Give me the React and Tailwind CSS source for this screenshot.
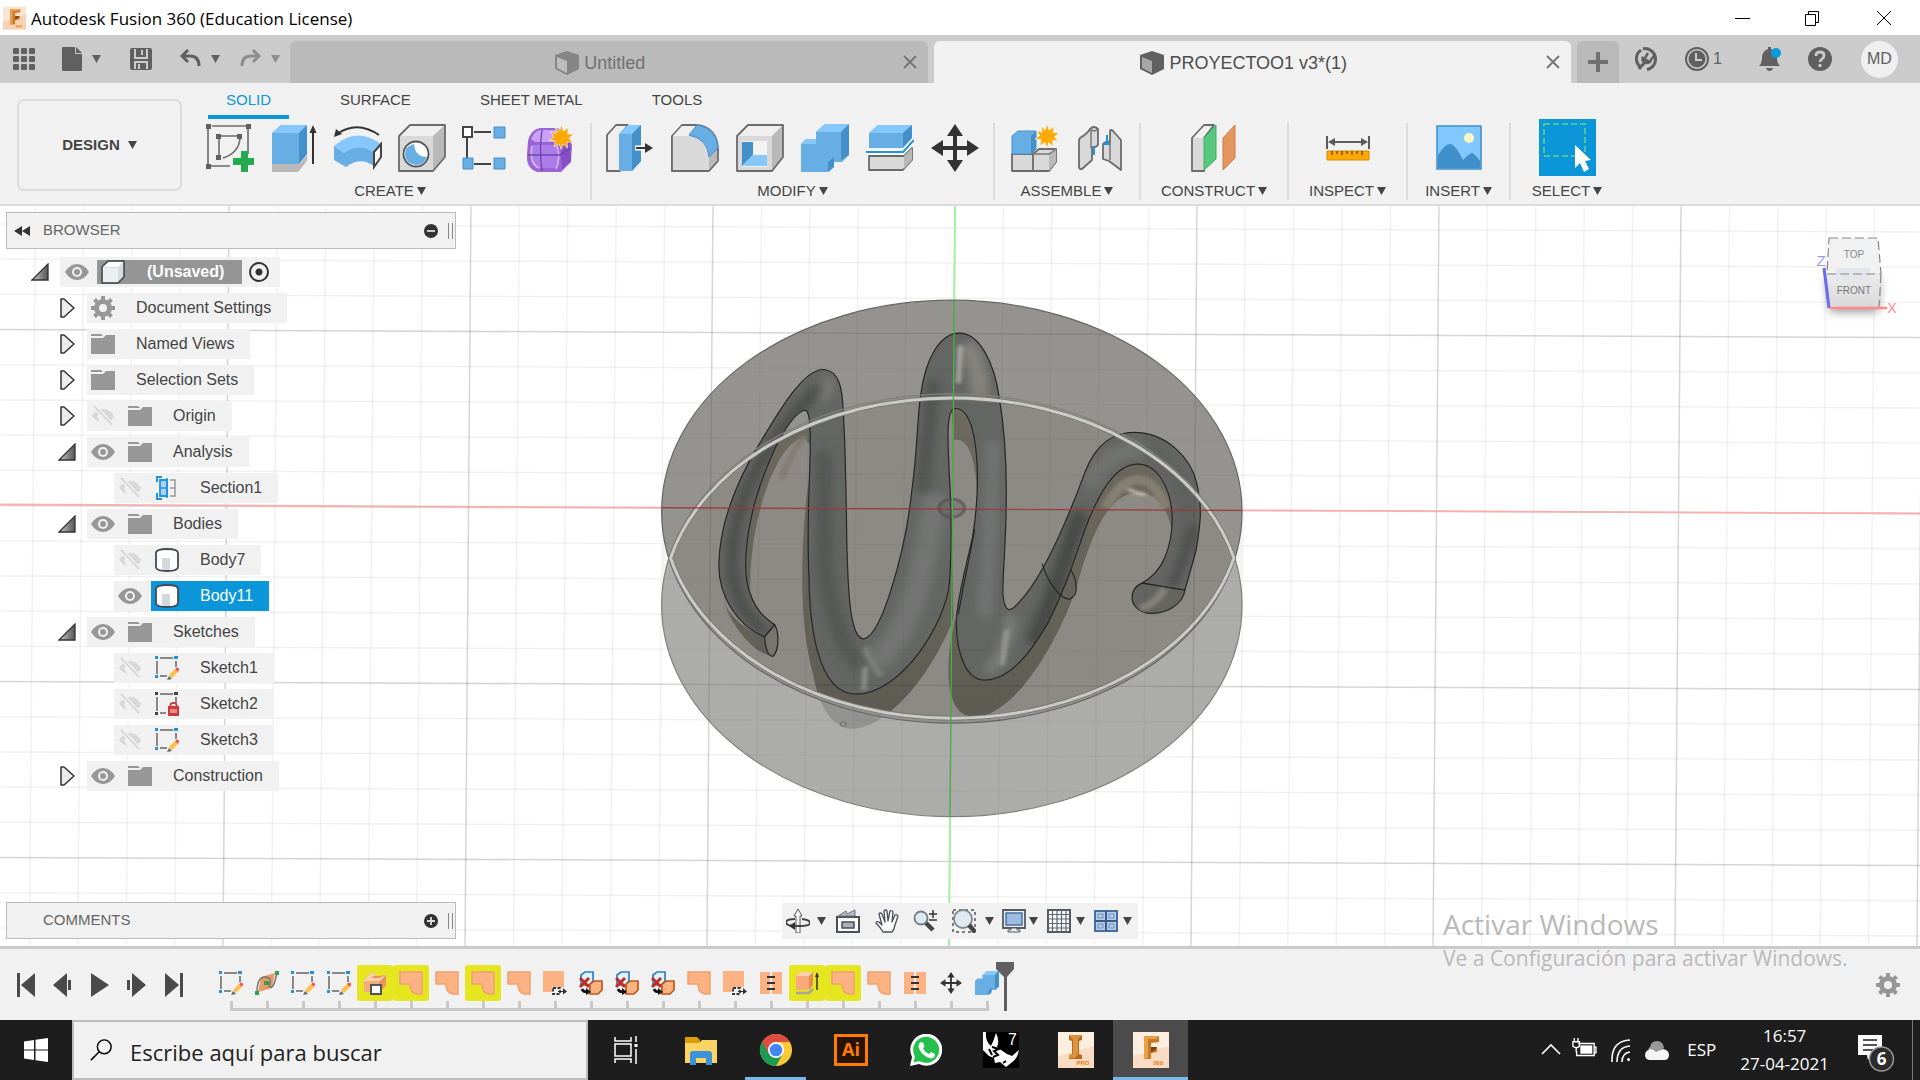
import React from "react";

const UI = "font-['Liberation_Sans',Arial,sans-serif]";
const SYS = "font-['Open_Sans','Noto_Sans',sans-serif]";

function Caret({ className = "text-[#444]" }) {
  return (
    <svg className={`inline-block h-[8px] w-[9px] ${className}`} viewBox="0 0 9 8" fill="currentColor" aria-hidden="true">
      <path d="M0 0h9L4.500 8z" />
    </svg>
  );
}

/* ---------- window title ---------- */

function FusionMark({ className }) {
  return (
    <svg className={className} viewBox="0 0 36 36" aria-hidden="true">
      <rect width="36" height="36" fill="#fbe6d3" />
      <path d="M0 24L36 12V36H0z" fill="#f7d3b3" />
      <path d="M11 4h16v5l-8 1v5h7v5l-7 1v7h-8z" fill="#d07a25" />
      <path d="M11 4h16l-3 3h-9v20l-4 1z" fill="#e9a050" />
      <path d="M19 15h7l-2 3-5 3z" fill="#8a4c14" />
      <path d="M20 31h10" stroke="#ee9a4c" strokeWidth="3" />
    </svg>
  );
}

function TitleBar() {
  return (
    <header className={`flex h-[35px] shrink-0 items-center bg-white pl-[3px] text-black ${SYS}`}>
      <FusionMark className="h-6 w-[23px]" />
      <h1 className="ml-[5px] mt-[3px] text-[17px] leading-6">Autodesk Fusion 360 (Education License)</h1>
      <div className="ml-auto flex">
        <button aria-label="Minimize" className="flex h-[34px] w-[69px] items-center justify-center">
          <svg className="h-4 w-4" viewBox="0 0 16 16"><path d="M0 8.500h15" stroke="#000" /></svg>
        </button>
        <button aria-label="Restore" className="flex h-[34px] w-[70px] items-center justify-center">
          <svg className="h-4 w-4" viewBox="0 0 16 16" fill="none" stroke="#000"><path d="M1.500 4.500h10v11h-10zM4.500 4V1.500h10v11H12" /></svg>
        </button>
        <button aria-label="Close" className="flex h-[34px] w-[73px] items-center justify-center">
          <svg className="h-4 w-4" viewBox="0 0 16 16"><path d="M1 1l14 14M15 1L1 15" stroke="#000" /></svg>
        </button>
      </div>
    </header>
  );
}

/* ---------- document tabs ---------- */

function DocCube({ className }) {
  return (
    <svg className={className} viewBox="0 0 24 24" aria-hidden="true">
      <path d="M0 4L12 0l12 4v14l-12 6L0 18z" fill="currentColor" />
      <path d="M2 6l10 4v12L2 17z" fill="#fff" opacity=".45" />
    </svg>
  );
}

function DocTab({ title, active }) {
  return (
    <div className={`flex h-[42px] min-w-0 flex-1 items-center rounded-t-[6px] pr-[9px] ${active ? "bg-[#f1f1f1] text-[#4d4d4d]" : "bg-[#bababa] text-[#707070]"}`}>
      <button className="flex min-w-0 flex-1 items-center justify-center pl-[10px] pt-[2px] text-[18px] leading-6">
        <DocCube className={`mr-[5px] h-6 w-6 shrink-0 ${active ? "text-[#606060]" : "text-[#858585]"}`} />
        {title}
      </button>
      <button aria-label={`Close ${title}`} className="p-[2px]">
        <svg className="h-[14px] w-[14px]" viewBox="0 0 14 14"><path d="M1 1l12 12M13 1L1 13" stroke="#777" strokeWidth="2" /></svg>
      </button>
    </div>
  );
}

function DocBar() {
  return (
    <div className="flex h-12 shrink-0 items-end bg-[#cbcbcb] text-[#606060]">
      <div className="flex h-12 w-[290px] shrink-0 items-center pl-[13px]">
        <button aria-label="Data panel">
          <svg className="h-[22px] w-[22px]" viewBox="0 0 22 22" fill="#606060">
            {[0, 1, 2].map((r) => [0, 1, 2].map((c) => <rect key={`${r}${c}`} x={c * 8} y={r * 8} width="6" height="6" rx="1" />))}
          </svg>
        </button>
        <button aria-label="File" className="ml-[27px] flex items-center gap-[10px]">
          <svg className="h-6 w-5" viewBox="0 0 20 24" fill="#606060"><path d="M1 0h12v7h7v16q0 1-1 1H1q-1 0-1-1V1q0-1 1-1zM14 0l6 6h-6z" /></svg>
          <Caret className="text-[#606060]" />
        </button>
        <button aria-label="Save" className="ml-[29px]">
          <svg className="h-[22px] w-[22px]" viewBox="0 0 22 22"><path d="M2 0h18q2 0 2 2v18q0 2-2 2H2q-2 0-2-2V2q0-2 2-2z" fill="#606060" /><path d="M5 1v9h12V1M5 21v-7h12v7" fill="none" stroke="#cbcbcb" strokeWidth="2" /><path d="M12 2v5M9 16v5" stroke="#cbcbcb" strokeWidth="2" /></svg>
        </button>
        <button aria-label="Undo" className="ml-7 flex items-center gap-[10px]">
          <svg className="h-[20px] w-[21px]" viewBox="0 0 21 20" fill="none" stroke="#606060" strokeWidth="3"><path d="M8 1L2 7l6 6M2 7h8q9 0 9 10" /></svg>
          <Caret className="text-[#606060]" />
        </button>
        <button aria-label="Redo" className="ml-5 flex items-center gap-[10px]">
          <svg className="h-[20px] w-[21px]" viewBox="0 0 21 20" fill="none" stroke="#8e8e8e" strokeWidth="3"><path d="M13 1l6 6-6 6M19 7h-8Q2 7 2 17" /></svg>
          <Caret className="text-[#8e8e8e]" />
        </button>
      </div>
      <div className="flex min-w-0 flex-1 gap-[6px]">
        <DocTab title="Untitled" />
        <DocTab title="PROYECTOO1 v3*(1)" active />
      </div>
      <button aria-label="New design" className="ml-[6px] flex h-[42px] w-[42px] items-center justify-center rounded-t-[6px] bg-[#b9b9b9]">
        <svg className="h-5 w-5" viewBox="0 0 20 20"><path d="M10 0v20M0 10h20" stroke="#707070" strokeWidth="4" /></svg>
      </button>
      <div className="flex h-12 w-[301px] shrink-0 items-center pl-[16px]">
        <button aria-label="Extensions">
          <svg className="h-6 w-6" viewBox="0 0 24 24" fill="none"><path d="M5.500 20A10.500 10.500 0 0 1 3 6l3-3M8 1.800A10.500 10.500 0 1 1 12 22.500" stroke="#606060" strokeWidth="3" /><path d="M4 22l6-7" stroke="#606060" strokeWidth="3" /><path d="M7 9l10 6q-5 4-9 1-3-3-1-7z" fill="#606060" /><path d="M10 11l3-5M15 14l4-5" stroke="#606060" strokeWidth="2.500" /></svg>
        </button>
        <button aria-label="Job status" className="ml-[25px] flex items-center gap-[3px] text-[16px]">
          <svg className="h-[26px] w-[26px]" viewBox="0 0 26 26"><circle cx="13" cy="13" r="11" fill="none" stroke="#606060" strokeWidth="2" /><circle cx="13" cy="13" r="8.500" fill="#606060" /><path d="M12 7v7h6" fill="none" stroke="#cbcbcb" strokeWidth="2" /></svg>
          1
        </button>
        <button aria-label="Notifications" className="ml-[36px]">
          <svg className="h-[26px] w-[24px]" viewBox="0 0 24 26" fill="#606060"><path d="M10 1h3v2q6 2 6 9 0 5 3 8H1q3-3 3-8 0-7 6-9zM8 22h7q-1 3-3.500 3T8 22z" /><circle cx="18" cy="7" r="5" fill="#0a9ade" /></svg>
        </button>
        <button aria-label="Help" className="ml-[25px]">
          <svg className="h-[26px] w-[26px]" viewBox="0 0 26 26"><circle cx="13" cy="13" r="12" fill="#606060" /><path d="M9 10q0-4 4-4t4 3.500q0 2-2 3.500t-2 3" fill="none" stroke="#cbcbcb" strokeWidth="2.800" /><circle cx="13" cy="19.500" r="1.700" fill="#cbcbcb" /></svg>
        </button>
        <button className="ml-[28px] flex h-[37px] w-[37px] items-center justify-center rounded-full bg-[#efefef] text-[16px]">MD</button>
      </div>
    </div>
  );
}

/* ---------- ribbon icons ---------- */

const B = "#67aee5";
const BL = "#86c8fb";
const BD = "#4490ca";
const G = "#d9d9d9";
const GL = "#efefef";
const GD = "#b9b9b9";
const ST = { stroke: "#6b6b6b", strokeWidth: 1.800, strokeLinejoin: "round" };

const star = "M14 0l2.500 7L22 3l-1 7 7 .500-5.500 4.500L27 20l-6.500-1 .500 7-5-4.500L14 28l-2.500-6.500L6 25l1-7-7-.500 5.500-4L2 8l6.500 1.500L7 3l5 4z";

function Icon({ children }) {
  return <svg className="h-12 w-12" viewBox="0 0 48 48" fill="none" aria-hidden="true">{children}</svg>;
}

const toolIcons = {
  sketch: (
    <Icon>
      <path d="M2 4v36M6 2h34M42 4v26M2 42h22M13 14v18M15 12h18M34 14q-1 15-17 20" stroke="#6b6b6b" strokeWidth="1.600" />
      <path d="M0 0h5v5H0zM40 0h5v5h-5zM0 40h5v5H0zM10 10h5v5h-5zM31 10h5v5h-5zM10 31h5v5h-5z" fill="#606060" />
      <path d="M35 27h7v7h7v7h-7v8h-7v-8h-8v-7h8z" fill="#23a94f" />
    </Icon>
  ),
  extrude: (
    <Icon>
      <path d="M2 40h28l7-9v6l-9 11H2z" fill={GD} />
      <path d="M2 9l9-8h26v29l-8 10H2z" fill={B} /><path d="M2 9l9-8h26l-8 8z" fill={BL} /><path d="M29 9l8-8v29l-8 10z" fill={BD} />
      <path d="M43 40V7" stroke="#333" strokeWidth="2" /><path d="M39.500 9h7L43 1z" fill="#333" />
    </Icon>
  ),
  revolve: (
    <Icon>
      <path d="M3 10q20-14 42 1" stroke="#333" strokeWidth="2" /><path d="M0 13l2-8 6 5z" fill="#333" />
      <path d="M0 22Q22 2 47 20l-7 8Q23 18 10 29z" fill={BL} /><path d="M0 22l10 7q13-11 30-1v14q-14-10-28 1L0 36z" fill={B} />
      <path d="M40 28l7-8v13l-7 10z" fill="#fff" stroke="#444" strokeWidth="2" />
    </Icon>
  ),
  hole: (
    <Icon>
      <path d="M1 12L12 1h35v32L35 47H1z" fill={G} /><path d="M1 12L12 1h35L35 12z" fill={GL} /><path d="M35 12L47 1v32L35 47z" fill={GD} />
      <path d="M1 12L12 1h35v32L35 47H1z" {...ST} />
      <circle cx="18" cy="30" r="12.500" fill="#fff" stroke="#555" strokeWidth="1.800" /><path d="M16 20q1 13 13 13-3 8-11 8-11-1-11-11 0-8 9-10z" fill={B} />
    </Icon>
  ),
  pattern: (
    <Icon>
      <path d="M12 8h17M5 14v20M12 40h17" stroke="#444" strokeWidth="2" />
      <rect x="1" y="3" width="9" height="10" fill="#fff" stroke="#444" strokeWidth="2" />
      <path d="M32 3h11v11H32zM1 34h10v11H1zM32 34h11v11H32z" fill={B} stroke={BD} />
    </Icon>
  ),
  form: (
    <Icon>
      <path d="M2 17Q4 6 14 4h17q13 5 15 17l-1 17-10 10H11Q0 44 1 31z" fill="#9a63d6" />
      <path d="M5 15q4-9 10-9h14q6 3 7 8l-6 4H9z" fill="#c9a2f8" /><path d="M5 21h25q4 8 1 23H12Q2 40 5 21z" fill="#aa7ee8" />
      <path d="M35 22l9-4 1 19-9 8z" fill="#8450c4" /><path d="M6 22q-3 18 7 22M31 21q4 14-1 24" stroke="#d9bdfb" strokeWidth="1.500" />
      <path d="M16 6q-3 20 0 41M2 31h32l11-7" stroke="#7440b0" strokeWidth="1.300" />
      <g transform="translate(23 1)"><path d={star} fill="#fda900" stroke="#f1f1f1" strokeWidth=".800" transform="scale(.88)" /></g>
    </Icon>
  ),
  press: (
    <Icon>
      <path d="M1 11L10 1h12l-8 10v36H1z" fill={GL} {...ST} /><path d="M13 10l9-9h13v36l-9 10H13z" fill={B} /><path d="M13 10l9-9h13l-9 9z" fill={BL} /><path d="M26 10l9-9v36l-9 10z" fill={BD} />
      <path d="M29 24h12" stroke="#fff" strokeWidth="5" /><path d="M30 24h10" stroke="#333" strokeWidth="2" /><path d="M39 19l8 5-8 5z" fill="#333" />
    </Icon>
  ),
  fillet: (
    <Icon>
      <path d="M1 12L11 1h14q21 2 22 24v12L38 47H1z" fill={GD} {...ST} /><path d="M1 12h18q19 4 19 20v15H1z" fill={G} /><path d="M2 12L11 2h14l-7 10z" fill={GL} /><path d="M1 12v35h37" {...ST} />
      <path d="M18 11l8-10q20 3 21 23l-9 9q-1-18-20-22z" fill={B} stroke={BD} />
    </Icon>
  ),
  shell: (
    <Icon>
      <path d="M1 12L12 1h35v32L36 47H1z" fill={G} /><path d="M1 12L12 1h35L36 12z" fill={GL} /><path d="M36 12L47 1v32L36 47z" fill={GD} /><path d="M1 12L12 1h35v32L36 47H1z" {...ST} />
      <path d="M6 17h25v26H6z" fill="#f3f3f3" /><path d="M6 18h11v13L6 42z" fill={BD} /><path d="M17 31h14v11H6z" fill={BL} />
    </Icon>
  ),
  combine: (
    <Icon>
      <path d="M0 20l5-5h10V8l9-8h24v31l-7 7h-8v5l-6 5H0z" fill={B} /><path d="M15 8l9-8h24l-8 8zM0 20l5-5h10v5z" fill={BL} /><path d="M40 8l8-8v31l-8 5zM27 38l6-5v10l-6 5z" fill={BD} />
    </Icon>
  ),
  split: (
    <Icon>
      <path d="M3 9l9-8h34v13L37 24H3z" fill={B} /><path d="M3 9l9-8h34l-9 8z" fill={BL} /><path d="M37 9l9-8v13L37 24z" fill={BD} />
      <path d="M3 32h35l8-8v12l-9 10H3z" fill={G} {...ST} /><path d="M38 32l8-8v12l-8 9z" fill={GD} />
      <path d="M0 28h37l11-12" stroke="#fff" strokeWidth="5" /><path d="M0 28h37l11-12" stroke="#1f93e0" strokeWidth="2" />
    </Icon>
  ),
  move: (
    <Icon>
      <path d="M24 6v36M6 24h36" stroke="#333" strokeWidth="4" /><path d="M16 12h16L24 0zM16 36h16L24 48zM12 16v16L0 24zM36 16v16l12-8z" fill="#333" />
    </Icon>
  ),
  component: (
    <Icon>
      <path d="M1 30h21v17H1zM22 30l6-5h17v13l-7 9H22z" fill={G} {...ST} /><path d="M38 30v17l7-9V25z" fill={GD} /><path d="M23 30h15l6-4" stroke="#777" strokeWidth="1.500" />
      <path d="M1 12l6-5h18v18l-5 5H1z" fill={B} stroke={BD} /><path d="M20 12l5-5v18l-5 5z" fill={BD} />
      <g transform="translate(24 0)"><path d={star} fill="#fda900" stroke="#f1f1f1" strokeWidth=".800" transform="scale(.86)" /></g>
    </Icon>
  ),
  joint: (
    <Icon>
      <path d="M4 14q7-4 10-9 4-4 8 0v15q0 3-5 3l-1 1v12L6 45q-3 1-3-3V17q0-2 1-3z" fill={G} {...ST} /><path d="M15 6v18" stroke="#777" strokeWidth="1.500" /><path d="M14 5q4 4 8 0" stroke="#777" strokeWidth="1.300" />
      <path d="M34 7q1-2 3 0l8 9v30L33 37l-6-2V20q2-3 7-2z" fill={G} {...ST} /><path d="M34 18v18" stroke="#777" strokeWidth="1.500" /><path d="M18 22v9M31 11v9M27 20h7" stroke="#1f93e0" strokeWidth="2" />
    </Icon>
  ),
  construct: (
    <Icon>
      <path d="M2 14L14 1h10L14 14v33H2z" fill={GL} {...ST} /><path d="M3 14h11v32H3z" fill={G} /><path d="M14 14L26 1v34L14 46z" fill="#57c77f" stroke="#3fae69" />
      <path d="M33 14L45 1v33L33 46z" fill="#e5965f" stroke="#cc7c45" />
    </Icon>
  ),
  inspect: (
    <Icon>
      <path d="M3 12v13M45 12v13M6 18h36" stroke="#5c5c5c" strokeWidth="2" /><path d="M4 18l7-4v8zM44 18l-7-4v8z" fill="#5c5c5c" />
      <path d="M3 27h42v9H3z" fill="#fda900" stroke="#d98c00" /><path d="M8 27v4M13 27v3M18 27v4M23 27v3M28 27v4M33 27v3M38 27v4" stroke="#7a4d00" strokeWidth="1.500" />
    </Icon>
  ),
  insert: (
    <Icon>
      <rect x="2" y="2" width="44" height="43" fill="#80c8ff" stroke="#3e8fcb" strokeWidth="1.500" /><circle cx="34" cy="14" r="5" fill="#fdf7c6" />
      <path d="M3 31Q10 20 15 20t13 16q7-7 9-7t8 8v7H3z" fill="#3f8fcb" />
    </Icon>
  ),
};

function SelectIcon() {
  return (
    <svg className="h-[57px] w-[57px] bg-[#0a96d8]" viewBox="0 0 57 57" fill="none" aria-hidden="true">
      <rect x="5" y="5" width="41" height="32" stroke="#5fd48c" strokeWidth="1.600" strokeDasharray="6 3" />
      <path d="M36 26l16 15-6 1 4 8-5 3-4-9-5 5z" fill="#fff" />
    </svg>
  );
}

const groups = [
  { name: "CREATE", width: "w-[402px]", cell: "w-16", tools: ["sketch", "extrude", "revolve", "hole", "pattern", "form"] },
  { name: "MODIFY", width: "w-[403px]", cell: "w-[65px]", tools: ["press", "fillet", "shell", "combine", "split", "move"] },
  { name: "ASSEMBLE", width: "w-[146px]", cell: "w-[65px]", tools: ["component", "joint"] },
  { name: "CONSTRUCT", width: "w-[148px]", cell: "w-16", tools: ["construct"] },
  { name: "INSPECT", width: "w-[119px]", cell: "w-16", tools: ["inspect"] },
  { name: "INSERT", width: "w-[103px]", cell: "w-16", tools: ["insert"] },
  { name: "SELECT", width: "w-[112px]", cell: "w-16", tools: ["select"] },
];

function Ribbon() {
  return (
    <div className="flex shrink-0 border-b-2 border-[#dcdcdc] bg-[#f1f1f1] text-[15px] text-[#444]">
      <div className="w-[190px] shrink-0 pl-[17px] pt-4">
        <button className="flex h-[92px] w-[165px] items-center justify-center gap-2 rounded-[7px] border-2 border-[#dcdcdc] font-bold">
          DESIGN <Caret />
        </button>
      </div>
      <div className="flex flex-col">
        <nav className="flex h-9 gap-[33px] pl-[18px]">
          {["SOLID", "SURFACE", "SHEET METAL", "TOOLS"].map((t, i) => (
            <button key={t} className={`border-b-[4px] px-[18px] pt-[2px] ${i === 0 ? "border-[#0a96d8] text-[#0a96d8]" : "border-transparent"}`}>{t}</button>
          ))}
        </nav>
        <div className="flex h-[85px]">
          {groups.map((g, i) => (
            <div key={g.name} className={`${g.width} flex`}>
              <div className="flex min-w-0 flex-1 flex-col items-center">
                <div className="flex h-[57px] items-center justify-center">
                  {g.tools.map((t) => (
                    <button key={t} aria-label={t} className={`flex justify-center ${g.cell}`}>
                      {t === "select" ? <SelectIcon /> : toolIcons[t]}
                    </button>
                  ))}
                </div>
                <button className="mt-[3px] flex items-center gap-[3px] leading-6">{g.name} <Caret /></button>
              </div>
              {i < groups.length - 1 && <div className="my-[4px] w-[2px] bg-[#dcdcdc]" />}
            </div>
          ))}
        </div>
      </div>
    </div>
  );
}

/* ---------- browser tree ---------- */

function Eye({ off }) {
  return off ? (
    <svg className="h-6 w-6" viewBox="0 0 24 24" fill="none"><path d="M1 12Q5 5 12 5q8 0 11 8-3 4-7 6l-3-3q3-2 2-5-2-4-6-2l-3 3 3 6Q4 16 1 12z" fill="#d8d8d8" /><path d="M3 2l18 19" stroke="#f1f1f1" strokeWidth="4.500" /><path d="M3 2l18 19" stroke="#d4d4d4" strokeWidth="1.800" /></svg>
  ) : (
    <svg className="h-6 w-6" viewBox="0 0 24 24"><path d="M0 12Q5 4 12 4t12 8q-5 8-12 8T0 12z" fill="#979797" /><circle cx="12" cy="12" r="5" fill="#f1f1f1" /><circle cx="12" cy="12" r="3" fill="#979797" /></svg>
  );
}

const treeIcons = {
  folder: <svg className="h-6 w-6" viewBox="0 0 24 24"><path d="M0 2h10l2 2H0zM0 6h12l3-3h9v19H0z" fill="#979797" /></svg>,
  gear: <Gear className="h-6 w-6 text-[#979797]" />,
  section: <svg className="h-6 w-6" viewBox="0 0 24 24" fill="none"><path d="M7 1H2v5M2 17v6h5" stroke="#1f93e0" strokeWidth="2" /><path d="M5 4h7v16H5z" fill="#a9d5f5" stroke="#1f93e0" strokeWidth="1.800" /><path d="M5 12h7M12 2v20" stroke="#1f93e0" strokeWidth="1.500" /><path d="M15 4h5v16h-5M15 12h5" stroke="#999" strokeWidth="1.500" /></svg>,
  body: <svg className="h-6 w-6" viewBox="0 0 24 24"><path d="M1 5q0-4 11-4t11 4v14q0 4-11 4T1 19z" fill="#fff" stroke="#444a55" strokeWidth="1.800" /><path d="M7 10h8v12H7z" fill="#d4d8df" /></svg>,
  sketch: <SketchGlyph className="h-6 w-6" />,
  locked: <svg className="h-6 w-6" viewBox="0 0 24 24"><path d="M2 5v14M5 2h13M21 5v6M5 21h6" stroke="#666" strokeWidth="1.500" /><path d="M0 0h3v3H0zM19 0h4v3h-4zM0 20h3v3H0z" fill="#444" /><path d="M13 14h11v10H13z" fill="#c93a3d" /><path d="M15 17h7v4h-7z" fill="#e88" /><path d="M15.500 14v-1q0-2 3-2t3 2v1" fill="none" stroke="#c93a3d" strokeWidth="1.800" /></svg>,
};

function SketchGlyph({ className }) {
  return (
    <svg className={className} viewBox="0 0 24 24"><path d="M2 5v13M5 2h13M21 5v6M5 20h7" stroke="#666" strokeWidth="1.500" /><path d="M0 0h3v3H0zM19 0h4v3h-4zM0 19h3v3H0z" fill="#1f93e0" /><path d="M14 19l6-6 3 3-6 6z" fill="#fdc14a" /><path d="M20 13l2-1.500q2 0 2 2L23 16z" fill="#f4484e" /><path d="M12 24l2-4 3 3z" fill="#666" /></svg>
  );
}

function Gear({ className }) {
  return (
    <svg className={className} viewBox="0 0 24 24" fill="none" stroke="currentColor" aria-hidden="true">
      <circle cx="12" cy="12" r="6.500" strokeWidth="5" />
      <path d="M12 0v4M12 20v4M0 12h4M20 12h4M3.500 3.500l3 3M17.500 17.500l3 3M3.500 20.500l3-3M17.500 6.500l3-3" strokeWidth="4" />
    </svg>
  );
}

function Twisty({ open }) {
  return open ? (
    <svg className="h-[18px] w-[18px]" viewBox="0 0 18 18"><defs><linearGradient id="tw"><stop offset="0" stopColor="#ccc" /><stop offset="1" stopColor="#555" /></linearGradient></defs><path d="M1 17L17 1v16z" fill="url(#tw)" stroke="#333" strokeWidth="1.300" /></svg>
  ) : (
    <svg className="h-5 w-[18px]" viewBox="0 0 18 20"><path d="M3 1h3l10 9-10 9H3z" fill="#ececec" stroke="#333" strokeWidth="1.500" strokeLinejoin="round" /></svg>
  );
}

const tree = [
  { t: "Document Settings", i: "gear", s: "closed" },
  { t: "Named Views", i: "folder", s: "closed" },
  { t: "Selection Sets", i: "folder", s: "closed" },
  { t: "Origin", i: "folder", s: "closed", eye: "off" },
  { t: "Analysis", i: "folder", s: "open", eye: "on" },
  { t: "Section1", i: "section", child: true, eye: "off" },
  { t: "Bodies", i: "folder", s: "open", eye: "on" },
  { t: "Body7", i: "body", child: true, eye: "off" },
  { t: "Body11", i: "body", child: true, eye: "on", sel: true },
  { t: "Sketches", i: "folder", s: "open", eye: "on" },
  { t: "Sketch1", i: "sketch", child: true, eye: "off" },
  { t: "Sketch2", i: "locked", child: true, eye: "off" },
  { t: "Sketch3", i: "sketch", child: true, eye: "off" },
  { t: "Construction", i: "folder", s: "closed", eye: "on" },
];

function TreeRow({ row }) {
  return (
    <li className={`flex h-[30px] items-center ${row.child ? "pl-[114px]" : "pl-[58px]"}`}>
      {!row.child && <button aria-label={`Toggle ${row.t}`} className="mr-[11px]"><Twisty open={row.s === "open"} /></button>}
      <div className="flex h-full items-center bg-[#f1f1f1]">
        {row.eye && <button aria-label={`Visibility of ${row.t}`} className="ml-1 mr-[9px]"><Eye off={row.eye === "off"} /></button>}
        <button className={`flex h-full items-center gap-[21px] pl-1 pr-4 text-[16px] ${row.sel ? "bg-[#0a96d8] text-white" : ""}`}>
          {treeIcons[row.i]}
          {row.t}
        </button>
      </div>
    </li>
  );
}

function PanelHead({ title, plus, back }) {
  return (
    <div className="flex h-[37px] w-[450px] items-center border border-[#bcbcbc] bg-[#f1f1f1] pl-[7px] pr-[2px] text-[15px] text-[#666]">
      <span className="w-[29px]">
        {back && (
          <button aria-label="Collapse" className="flex">
            <svg className="h-[10px] w-4" viewBox="0 0 16 10"><path d="M8 0v10L0 5zM16 0v10L8 5z" fill="#333" /></svg>
          </button>
        )}
      </span>
      <h2>{title}</h2>
      <button aria-label={plus ? "Add comment" : "Hide panel"} className="ml-auto flex">
        <svg className="h-[14px] w-[14px]" viewBox="0 0 14 14"><circle cx="7" cy="7" r="7" fill="#333" /><path d={plus ? "M3 7h8M7 3v8" : "M3 7h8"} stroke="#ddd" strokeWidth="1.800" /></svg>
      </button>
      <span className="ml-[10px] h-4 w-[5px] border-x border-[#888]" />
    </div>
  );
}

function BrowserPanel() {
  return (
    <div className="pl-[6px] pt-[6px]">
      <PanelHead title="BROWSER" back />
      <div className="-ml-[6px] mt-2 flex flex-col gap-[6px] text-[#444]">
        <div className="flex h-[30px] items-center pl-[31px]">
          <button aria-label="Toggle document" className="mr-[11px]"><Twisty open /></button>
          <div className="flex h-full items-center bg-[#f1f1f1] pl-[5px] pr-[11px]">
            <button aria-label="Visibility of document"><Eye /></button>
            <button className="ml-2 flex h-6 items-center gap-[22px] bg-[#959595] pl-1 pr-[18px] text-[16px] font-bold text-white">
              <svg className="h-6 w-6" viewBox="0 0 24 24"><path d="M1 7l6-6h16v16l-6 6H1z" fill="#d9dce2" stroke="#3c4250" strokeWidth="1.500" strokeLinejoin="round" /><path d="M2 7l6-5h14l-5 5z" fill="#fff" /><path d="M2 8h15v14H2z" fill="#eceef1" /></svg>
              (Unsaved)
            </button>
            <input type="radio" defaultChecked aria-label="Activate document" className="ml-[7px] h-5 w-5 appearance-none rounded-full border-2 border-[#333] bg-[radial-gradient(circle,#333_0_3px,transparent_4px)]" />
          </div>
        </div>
        <ul className="flex flex-col gap-[6px]">
          {tree.map((r) => <TreeRow key={r.t} row={r} />)}
        </ul>
      </div>
    </div>
  );
}

/* ---------- modelling viewport ---------- */

const range = (a, b) => Array.from({ length: b - a + 1 }, (_, i) => a + i);

function GridLines() {
  return (
    <g stroke="#000" strokeWidth="1.500">
      {range(-20, 20).map((k) => (
        <line key={`v${k}`} x1={955 + 48.4 * k} y1="0" x2={949 + 48.4 * k} y2="741" strokeOpacity={k % 5 ? 0.055 : 0.160} />
      ))}
      {range(-9, 13).map((k) => (
        <line key={`h${k}`} x1="0" y1={300 + 35.2 * k} x2="1920" y2={308 + 35.2 * k} strokeOpacity={k % 5 ? 0.055 : 0.160} />
      ))}
    </g>
  );
}

const TUBE =
  "M305 1001C240 970 193 890 193 800C195 680 240 560 290 465C340 370 400 250 450 252C490 255 496 310 498 370C504 480 505 620 507 750C510 880 515 1005 548 1006C592 1000 650 760 665 600C680 480 678 400 688 320C700 220 735 150 783 150C830 150 868 230 880 330C895 430 899 530 897 640C896 750 888 830 889 880C893 932 905 935 928 905C990 830 1045 680 1090 540C1120 450 1170 428 1210 428C1290 428 1350 500 1364 570C1378 640 1374 680 1362 760L1335 870L1230 850C1280 820 1305 750 1304 660C1300 580 1265 517 1220 517C1160 517 1120 610 1090 700C1060 800 1040 870 1000 960C950 1060 900 1122 843 1122C800 1120 775 1050 775 960C775 900 800 800 815 720C832 600 830 480 812 410C797 362 777 356 764 366C750 390 755 470 757 530C762 620 765 740 758 850C750 960 640 1161 530 1161C430 1161 415 950 414 830C408 700 416 560 417 480C418 400 415 365 403 366C370 375 320 480 285 610C255 730 252 830 270 880C285 930 310 950 330 967Z";

const LENS = "M75 780A711 591 0 0 1 1455 780A711 591 0 0 1 75 780Z";

const BROWN =
  "M205 900C220 960 270 1040 322 1055L330 1000L305 1001C240 970 215 930 205 900Z" +
  "M403 366C370 375 320 480 285 610C255 730 252 830 270 880C268 700 310 560 350 490C375 450 395 440 405 447L417 465Q418 366 403 366Z" +
  "M413 560C395 720 385 950 425 1110C440 1210 480 1258 520 1258C600 1258 710 1120 768 950L765 640L758 850C750 960 640 1161 530 1161C430 1161 415 950 414 830Z" +
  "M764 366Q790 356 812 410C832 480 840 600 835 680C825 770 800 850 780 930C798 800 826 700 826 590C820 490 800 440 768 450Z" +
  "M772 950C745 1080 745 1225 820 1225C920 1225 1030 1000 1070 860C1110 700 1150 598 1220 598C1270 598 1290 640 1303 700C1312 600 1265 517 1220 517C1160 517 1120 610 1090 700C1060 800 1040 870 1000 960C950 1060 900 1122 843 1122C800 1120 775 1050 775 960Z";

function Model() {
  const line = { fill: "none", stroke: "#262626", strokeWidth: 1.200, vectorEffect: "non-scaling-stroke" };
  return (
    <g transform="translate(640 74) scale(.40816 .35714)">
      <path d="M53 665V910A711 591 0 0 0 1475 910V665z" fill="#f3f3f2" />
      <ellipse cx="764" cy="912" rx="711" ry="592" fill="#acacaa" />
      <ellipse cx="764" cy="650" rx="711" ry="592" fill="#94938f" />
      <path d={LENS} fill="#8d8a85" />
      <path d={BROWN} fill="#929290" />
      <g clipPath="url(#lens)">
        <path d={BROWN} fill="url(#brown)" />
        <path d="M1140 640Q1180 560 1220 560T1290 640" fill="none" stroke="#857f72" strokeWidth="26" filter="url(#fine)" />
        <path d="M345 560Q380 460 405 440" fill="none" stroke="#7f7a70" strokeWidth="14" filter="url(#fine)" />
      </g>
      <path d={TUBE} fill="#646664" />
      <g clipPath="url(#tube)">
        <g fill="none" filter="url(#soft)">
          <path d="M440 300C370 380 225 560 225 800C230 900 270 960 310 985" stroke="#4e4f4e" strokeWidth="30" />
          <path d="M450 480L452 800C465 920 500 1050 540 1080" stroke="#565856" strokeWidth="44" />
          <path d="M570 1070C660 1020 700 800 725 600" stroke="#737573" strokeWidth="60" />
          <path d="M690 600C700 480 710 400 720 280" stroke="#535453" strokeWidth="36" />
          <path d="M745 560V340" stroke="#666866" strokeWidth="20" />
          <path d="M865 450C865 620 850 800 845 950" stroke="#727473" strokeWidth="34" />
          <path d="M800 180Q830 240 835 330" stroke="#84837e" strokeWidth="46" />
          <path d="M960 1020C1010 910 1040 780 1080 650" stroke="#474847" strokeWidth="40" />
          <path d="M1100 580C1120 520 1160 480 1230 475" stroke="#727371" strokeWidth="46" />
          <path d="M1250 470Q1350 560 1340 680L1320 800" stroke="#5f605e" strokeWidth="34" />
          <path d="M1300 860Q1340 780 1355 690" stroke="#484948" strokeWidth="20" />
          <path d="M445 340Q475 300 455 275" stroke="#7b7a77" strokeWidth="22" />
          <path d="M850 1100Q900 1050 910 940" stroke="#7d7e7b" strokeWidth="26" />
        </g>
        <g fill="none" filter="url(#fine)">
          <path d="M785 185L780 290" stroke="#b9b8b1" strokeWidth="10" />
          <path d="M899 980L887 1080" stroke="#a3a3a0" strokeWidth="9" />
          <path d="M552 1085L548 1150" stroke="#a09f9b" strokeWidth="9" />
          <path d="M552 1030Q560 1060 590 1110" stroke="#7f807d" strokeWidth="16" />
        </g>
      </g>
      <path d="M1195 586Q1215 600 1240 602" stroke="#c5c0b5" strokeWidth="9" fill="none" filter="url(#fine)" />
      <path d={TUBE} {...line} />
      <path d="M330 967L305 1001C308 1040 315 1056 326 1055C340 1040 342 990 330 967Z" {...line} fill="#77756f" />
      <path d="M1230 850L1335 870C1330 910 1290 937 1245 935C1195 925 1195 865 1230 850Z" {...line} fill="#646460" />
      <path d="M1285 865Q1265 910 1225 920" fill="none" stroke="#85817a" strokeWidth="20" filter="url(#fine)" />
      <path d="M985 795C1000 850 1030 895 1052 895C1078 885 1070 840 1055 812M780 937C788 880 800 820 820 700" {...line} />
      <ellipse cx="498" cy="1245" rx="7" ry="6" {...line} stroke="#777" />
      <g>
        <ellipse cx="764" cy="650" rx="711" ry="592" {...line} stroke="#666" />
        <ellipse cx="764" cy="912" rx="711" ry="592" {...line} stroke="#808080" />
        <path d={LENS} {...line} stroke="#777672" strokeWidth={4.600} />
        <path d={LENS} {...line} stroke="#cbcbc8" strokeWidth={3} />
      </g>
      <ellipse cx="764" cy="640" rx="31" ry="25" fill="#666" fillOpacity=".3" stroke="#505050" strokeOpacity=".6" strokeWidth="9" />
    </g>
  );
}

function Viewport() {
  return (
    <svg className="absolute inset-0 h-full w-full" viewBox="0 0 1920 741" preserveAspectRatio="xMidYMid slice" role="img" aria-label="Body11 section view">
      <defs>
        <clipPath id="lens"><path d={LENS} /></clipPath>
        <clipPath id="tube"><path d={TUBE} /></clipPath>
        <clipPath id="disc"><ellipse cx="951.8" cy="306" rx="290" ry="211" /><ellipse cx="951.8" cy="400" rx="290" ry="211" /></clipPath>
        <filter id="soft" x="-30%" y="-30%" width="160%" height="160%"><feGaussianBlur stdDeviation="12" /></filter>
        <filter id="fine" x="-100%" y="-50%" width="300%" height="200%"><feGaussianBlur stdDeviation="5" /></filter>
        <linearGradient id="brown" x1="0" y1="0" x2="0" y2="1"><stop offset="0" stopColor="#6d695f" /><stop offset=".6" stopColor="#66635b" /><stop offset="1" stopColor="#5d5a52" /></linearGradient>
      </defs>
      <rect width="1920" height="741" fill="#fff" />
      <GridLines />
      <path d="M0 299L1920 308" stroke="#fbaeae" strokeWidth="1.800" />
      <path d="M955 0L949 741" stroke="#9af59a" strokeWidth="1.800" />
      <Model />
      <g clipPath="url(#disc)">
        <g opacity=".6"><GridLines /></g>
        <path d="M0 299L1920 308" stroke="#a33a3a" strokeWidth="1.200" />
        <path d="M955 0L949 741" stroke="#46b546" strokeWidth="1.300" />
      </g>
    </svg>
  );
}

function ViewCube() {
  return (
    <svg className="absolute right-[20px] top-[22px] h-[95px] w-[90px]" viewBox="0 0 90 95" role="img" aria-label="View cube">
      <defs>
        <linearGradient id="cf" x1="0" y1="0" x2="0" y2="1"><stop offset="0" stopColor="#ececee" /><stop offset="1" stopColor="#d8d8d8" /></linearGradient>
        <filter id="sh" x="-30%" y="-30%" width="160%" height="160%"><feGaussianBlur stdDeviation="5" /></filter>
      </defs>
      <path d="M16 50h54l-2 34H20z" fill="#999" filter="url(#sh)" />
      <path d="M19 10h49l3 36H17z" fill="#f1f1f1" /><path d="M17 46h54l-2 34H20z" fill="url(#cf)" />
      <path d="M26 40h34v12H26z" fill="#e4e6ec" />
      <path d="M19 10h49l3 36H17zM71 46l-2 34" fill="none" stroke="#888" strokeWidth="1.200" strokeDasharray="9 4" />
      <path d="M14 40l5 40" stroke="#6a6af0" strokeWidth="3" /><path d="M20 80h57" stroke="#f88" strokeWidth="2.500" />
      <g className={UI} textAnchor="middle">
        <text x="44" y="30" fontSize="10" fill="#888">TOP</text>
        <text x="44" y="66" fontSize="10" fill="#777">FRONT</text>
        <text x="11" y="38" fontSize="15" fill="#9a9af5">Z</text>
        <text x="82" y="85" fontSize="14" fill="#f88">X</text>
      </g>
    </svg>
  );
}

const navIcons = [
  { n: "Orbit", w: "w-8", c: "w-[15px] justify-center", a: <><path d="M10 24V7H8l4-7 4 7h-2v17z" fill="#fff" stroke="#555" /><path d="M9 10q-9 0-9 3.500T12 17t12-3q0-3-8-4" fill="none" stroke="#444" strokeWidth="2" /><path d="M9 13v8l-6-4z" fill="#333" /></> },
  { n: "Look at", w: "w-[38px]", a: <><path d="M1 8h22v15H1z" fill="#fff" stroke="#4a4f5a" strokeWidth="2" /><path d="M6 13h12v6H6z" fill="#a9b0b8" stroke="#4a4f5a" strokeWidth="1.500" /><path d="M2 7l8-5 1 3 8-4v6z" fill="#b4bcc6" stroke="#6b7380" /></> },
  { n: "Pan", w: "w-10", a: <path d="M8 23Q6 19 1 14q0-2 3-1l3 3L4 5q1-2 3 0l3 8L9 2q2-2 3 0l1 10 2-10q2-1 3 1l-1 10 3-7q2-1 3 1l-3 9q-1 5-3 7z" fill="#fff" stroke="#4a4f5a" strokeWidth="1.300" strokeLinejoin="round" /> },
  { n: "Zoom", w: "w-9", a: <><circle cx="8" cy="9" r="6.500" fill="#dfe9ee" stroke="#6f7f88" strokeWidth="1.800" /><path d="M13 14l7 7" stroke="#444" strokeWidth="4.500" /><path d="M16 5h8M20 1v8M16 11h8" stroke="#333" strokeWidth="1.500" /></> },
  { n: "Fit", w: "w-[42px]", c: "w-[13px]", a: <><path d="M1 1h22v22H1z" fill="none" stroke="#555" strokeWidth="1.500" strokeDasharray="3 3" /><circle cx="11" cy="10" r="9" fill="#dfe9ee" stroke="#7c8a90" strokeWidth="1.800" /><path d="M17 16l6 7" stroke="#444" strokeWidth="4.500" /></> },
  { n: "Display settings", w: "w-[31px]", c: "w-[13px]", a: <><path d="M1 1h22v18H1z" fill="#eee" stroke="#555a63" strokeWidth="1.800" /><path d="M4 4h16v12H4z" fill="#9dbde0" stroke="#4672a8" strokeWidth="1.500" /><path d="M9 19h6v2h3v2H6v-2h3z" fill="#eee" stroke="#555a63" /></> },
  { n: "Grid settings", w: "w-[34px]", c: "w-[13px]", a: <><path d="M1 1h22v22H1z" fill="#fff" stroke="#555a63" strokeWidth="2" /><path d="M5.500 1v22M10 1v22M14.500 1v22M19 1v22M1 5.500h22M1 10h22M1 14.500h22M1 19h22" stroke="#5c6470" strokeWidth="1.200" /></> },
  { n: "Viewports", w: "w-[34px]", c: "w-[13px]", a: <><path d="M1 2h22v20H1z" fill="#b4cde8" stroke="#4a6c9c" strokeWidth="2" /><path d="M12 2v20M1 12h22" stroke="#3c5a88" strokeWidth="2" /><path d="M4 5h5v4H4zM15 5h5v4h-5zM4 15h5v4H4zM15 15h5v4h-5z" fill="none" stroke="#6b92c0" /></> },
];

function NavBar() {
  return (
    <div className="absolute bottom-[7px] left-1/2 flex h-9 -translate-x-1/2 items-center bg-[#f1f1f1] pr-[2px]">
      {navIcons.map((n) => (
        <button key={n.n} aria-label={n.n} className="flex items-center">
          <span className={`flex justify-center ${n.w}`}><svg className="h-6 w-6" viewBox="0 0 24 24">{n.a}</svg></span>
          {n.c && <span className={`flex ${n.c}`}><Caret /></span>}
        </button>
      ))}
    </div>
  );
}

/* ---------- timeline ---------- */

const P = "#fcb283";
const featIcons = {
  sketch: <SketchGlyph className="h-6 w-6" />,
  loft: <svg className="h-6 w-6" viewBox="0 0 24 24"><path d="M6 6l14-4-3 15L3 21z" fill="#e99a68" /><path d="M2 21Q2 6 10 6t4 9q4 6 8-13" fill="none" stroke="#777" strokeWidth="1.500" /><path d="M0 20h4v4H0zM20 0h4v4h-4zM9 10h5v4H9z" fill="#27a552" /></svg>,
  box: <svg className="h-6 w-6" viewBox="0 0 24 24"><path d="M1 9l6-6 5-2-1 4h5l7-1v11l-7 6H1z" fill="#e8935c" /><path d="M1 9h15v12H1z" fill="#f3ac7c" /><path d="M1 9l6-6 5-2-1 4-3 2h8l7-3-6 6H1z" fill="#fdd0ae" /><path d="M8 14h10v9H8z" fill="#fff" stroke="#555" strokeWidth="2" /></svg>,
  fillet: <svg className="h-6 w-6" viewBox="0 0 24 24"><path d="M1 1h22v22h-5q-7-1-7-10H1z" fill={P} stroke="#eda070" strokeWidth="1.500" /></svg>,
  press: <svg className="h-6 w-6" viewBox="0 0 24 24"><path d="M0 0h21v21H0z" fill={P} /><path d="M9 16h15v8H9z" fill="#f1f1f1" /><path d="M10 17h7v6h-7z" fill="none" stroke="#333" strokeWidth="1.800" strokeDasharray="3 1.500" /><path d="M15 20h5v-3l4 3.500-4 3V21h-5z" fill="#333" /></svg>,
  remove: <svg className="h-6 w-6" viewBox="0 0 24 24"><path d="M2 4l4-3h8v9l-3 4H2z" fill="#e4f0fa" stroke="#2a80cc" strokeWidth="1.700" /><path d="M1 7l9 9M10 7l-9 9" stroke="#c22a22" strokeWidth="3" /><path d="M3 18q1 3 5 3" fill="none" stroke="#111" strokeWidth="2.500" /><path d="M11 13l4-3h8v9l-4 4h-8z" fill={P} stroke="#b8591c" strokeWidth="1.700" /><path d="M7 17l5 4-5 3z" fill="#111" /></svg>,
  split: <svg className="h-6 w-6" viewBox="0 0 24 24"><path d="M1 1h10v22H1zM13 1h10v22H13z" fill={P} /><path d="M8 6h8M8 12h8M8 18h8" stroke="#333" strokeWidth="2" /></svg>,
  extrude: <svg className="h-6 w-6" viewBox="0 0 24 24"><path d="M1 5l4-4h13v13l-4 5H1z" fill="#e98a50" /><path d="M1 5h13v14H1z" fill="#f9a97a" /><path d="M1 5l4-4h13l-4 4z" fill="#fdd0ae" /><path d="M1 22h13l4-4" fill="none" stroke="#a5a5a5" strokeWidth="2.500" /><path d="M22 19V4" stroke="#333" strokeWidth="1.500" /><path d="M20 6l2-5 2 5z" fill="#333" /></svg>,
  move: <svg className="h-[22px] w-[22px]" viewBox="0 0 48 48"><path d="M24 6v36M6 24h36" stroke="#333" strokeWidth="4" /><path d="M16 12h16L24 0zM16 36h16L24 48zM12 16v16L0 24zM36 16v16l12-8z" fill="#333" /></svg>,
  combine: <svg className="h-6 w-6" viewBox="0 0 48 48"><path d="M0 20l5-5h10V8l9-8h24v31l-7 7h-8v5l-6 5H0z" fill={B} /><path d="M15 8l9-8h24l-8 8z" fill={BL} /><path d="M40 8l8-8v31l-8 5zM27 38l6-5v10l-6 5z" fill={BD} /></svg>,
};

const features = [
  "sketch", "loft", "sketch", "sketch", "box*", "fillet*", "fillet", "fillet*", "fillet", "press", "remove",
  "remove", "remove", "fillet", "press", "split", "extrude*", "fillet*", "fillet", "split", "move", "combine",
];

const playback = [
  ["Go to start", "M1 0h3v24H1zM19 0v24L5 12z"],
  ["Step back", "M14 0v24L0 12zM15 7h3v10h-3z"],
  ["Play", "M1 0l18 12L1 24z"],
  ["Step forward", "M5 0l14 12L5 24zM0 7h3v10H0z"],
  ["Go to end", "M1 0l14 12L1 24zM16 0h3v24h-3z"],
];

function Timeline() {
  return (
    <div className="flex h-[74px] shrink-0 items-start border-t-[3px] border-[#cbcbcb] bg-[#f1f1f1]">
      <div className="mt-4 flex h-10 w-[213px] shrink-0 items-center pl-[7px]">
        {playback.map(([n, d]) => (
          <button key={n} aria-label={n} className="flex w-[37px] justify-center">
            <svg className="h-6 w-[19px]" viewBox="0 0 19 24"><path d={d} fill="#4a4a4a" /></svg>
          </button>
        ))}
      </div>
      <ol className="mt-4 flex">
        {features.map((f, i) => (
          <li key={i} className="flex w-9 flex-col">
            <button aria-label={f.replace("*", "")} className={`flex h-[36px] items-center justify-center rounded-[3px] ${f.endsWith("*") ? "bg-[#e5e620]" : ""}`}>
              {featIcons[f.replace("*", "")]}
            </button>
            <span className="flex h-[10px]">
              <span className={`w-[17px] border-[#c8c8c8] ${i > 0 ? "border-b-[3px]" : ""}`} />
              <span className="w-[3px] bg-[#c8c8c8]" />
              <span className={`flex-1 border-[#c8c8c8] ${i < features.length - 1 ? "border-b-[3px]" : ""}`} />
            </span>
          </li>
        ))}
      </ol>
      <svg className="-ml-[9px] mt-[13px] h-[49px] w-[18px]" viewBox="0 0 18 49" aria-hidden="true"><path d="M0 0h18v7l-7 8v34H8V15L0 7z" fill="#606060" /></svg>
      <button aria-label="Timeline settings" className="ml-auto mr-5 mt-6"><Gear className="h-6 w-6 text-[#979797]" /></button>
    </div>
  );
}

/* ---------- Windows taskbar ---------- */

const apps = [
  { n: "Task view", a: <svg className="h-7 w-7" viewBox="0 0 28 28" fill="none" stroke="#fff" strokeWidth="1.500"><path d="M3 1v4h16V1M3 27v-4h16v4M3 8h16v12H3zM24 0v6M24 13v15" /><path d="M24 8v3" strokeWidth="3" /></svg> },
  { n: "File Explorer", a: <svg className="h-8 w-8" viewBox="0 0 32 32"><path d="M0 3h12l3 3v5H0z" fill="#dd9c0a" /><path d="M0 9h14l3-3h15v23H0z" fill="#fbd462" /><path d="M5 31V20q0-3 3-3h16q3 0 3 3v11h-6v-7H11v7z" fill="#3c92dd" /></svg> },
  { n: "Chrome", run: true, a: <svg className="h-[34px] w-[34px]" viewBox="0 0 34 34"><circle cx="17" cy="17" r="16" fill="#fcc934" /><path d="M17 17L3.100 9A16 16 0 0 0 17 33l7-12z" fill="#1a9c55" /><path d="M3.100 9A16 16 0 0 1 30.900 9H17l-7 12z" fill="#de4d41" /><circle cx="17" cy="17" r="8" fill="#fff" /><circle cx="17" cy="17" r="6.300" fill="#4286f5" /></svg> },
  { n: "Illustrator", a: <svg className="h-8 w-[34px]" viewBox="0 0 34 32"><rect x="1.500" y="1.500" width="31" height="29" fill="#261300" stroke="#ff7c00" strokeWidth="3" /><text x="17" y="22" textAnchor="middle" fontSize="18" fontWeight="bold" fill="#ff7c00" className={SYS}>Ai</text></svg> },
  { n: "WhatsApp", a: <svg className="h-8 w-8" viewBox="0 0 32 32"><path d="M0 32l2-9A16 16 0 1 1 9 30z" fill="#fff" /><path d="M3.500 28.500l1.500-6A13 13 0 1 1 9.500 27z" fill="#25c04b" /><path d="M11 8l2 .500 1.500 4-1.500 2q2 4 6 5.500l2-2 4 2q0 4-4 4.500Q11 22 8.500 13q0-4 2.500-5z" fill="#fff" /></svg> },
  { n: "Rhino 7", a: <svg className="h-9 w-9" viewBox="0 0 36 36"><rect width="36" height="36" fill="#000" /><path d="M0 0h3q-1 9 5 14Q11 8 13 1q4 8 1 14l4 3 6 4 5 2 7-6q-2 10-8 13l-5 4-6-5-5 1-1-5-5-2-6-6z" fill="#fff" /><path d="M9 15l7 2-5 2 4 4-5 2M20 31l3-2M6 17l3 6" stroke="#000" strokeWidth="2" fill="none" /><text x="25" y="13" fontSize="16" fill="#fff" className={UI}>7</text></svg> },
  { n: "Inventor", a: <svg className="h-9 w-9" viewBox="0 0 36 36"><rect width="36" height="36" fill="#fdeee2" /><path d="M0 24l36-10v22H0z" fill="#f9dcc3" /><path d="M11 3h13v5l-3 1v13l3 1v4H11v-4l3-1V9l-3-1z" fill="#b96a1c" /><path d="M11 3h13l-4 4v15l-3 4h-6v-3l4-1V8z" fill="#dd9440" /><text x="25" y="33" textAnchor="middle" fontSize="6" fontWeight="bold" fill="#ee7a14" className={UI}>PRO</text></svg> },
  { n: "Fusion 360", run: true, active: true, a: <svg className="h-9 w-9" viewBox="0 0 36 36"><rect width="36" height="36" fill="#fdeee2" /><path d="M0 24l36-10v22H0z" fill="#f9dcc3" /><path d="M11 4h15v6l-8 1v4h6v5l-6 1v6h-7z" fill="#c97a24" /><path d="M11 4h15l-3 3h-8v19l-4 1z" fill="#eaa04a" /><path d="M18 15h6l-2 3-4 3z" fill="#7d4411" /><text x="25" y="33" textAnchor="middle" fontSize="6" fontWeight="bold" fill="#ee7a14" className={UI}>360</text></svg> },
];

function Taskbar() {
  return (
    <footer className={`flex h-[60px] shrink-0 bg-[#1d1d1d] text-white ${SYS}`}>
      <button aria-label="Start" className="flex w-[72px] items-center justify-center">
        <svg className="h-6 w-6" viewBox="0 0 24 24" fill="#fff"><path d="M0 3.500L10 2v9.500H0zM11.500 1.800L24 0v11.500H11.500zM0 12.500h10V22L0 20.500zM11.500 12.500H24V24l-12.500-1.800z" /></svg>
      </button>
      <label className="flex w-[516px] items-center border-2 border-[#bcbcbc] bg-[#f1f1f1] pl-4">
        <svg className="h-6 w-6" viewBox="0 0 24 24" fill="none" stroke="#000" strokeWidth="1.600"><circle cx="15.500" cy="8.500" r="7.500" /><path d="M10 14L1 23" /></svg>
        <input aria-label="Buscar" className="ml-[18px] w-full bg-transparent pt-1 text-[22px] text-[#222] outline-none placeholder:text-[#222] placeholder:opacity-100" placeholder="Escribe aquí para buscar" />
      </label>
      <div className="flex">
        {apps.map((a) => (
          <div key={a.n} className="flex w-[75px] justify-center">
            <button aria-label={a.n} className={`flex flex-1 items-center justify-center border-y-[3px] ${a.active ? "border-b-[#76b9ed] border-t-[#4b4b4b] bg-[#4b4b4b]" : a.run ? "mx-[7px] border-b-[#76b9ed] border-t-transparent" : "border-transparent"}`}>{a.a}</button>
          </div>
        ))}
      </div>
      <div className="ml-auto flex items-center">
        <button aria-label="Hidden icons" className="mr-[10px]"><svg className="h-5 w-5" viewBox="0 0 20 20" fill="none" stroke="#fff" strokeWidth="1.600"><path d="M1 14l9-9 9 9" /></svg></button>
        <button aria-label="Battery" className="mr-3"><svg className="h-6 w-[26px]" viewBox="0 0 26 26" fill="none" stroke="#fff" strokeWidth="1.500"><path d="M7 6h17v13H5v-5M24 10h2v6h-2" /><path d="M9 8h13v9H9z" fill="#fff" stroke="none" /><path d="M1 4h7v5q-3 3-7 0zM2.500 4V0M6.500 4V0M4.500 11v4" /></svg></button>
        <button aria-label="Network" className="mr-3"><svg className="h-6 w-6" viewBox="0 0 24 24" fill="none" stroke="#fff" strokeWidth="1.600"><path d="M3 24Q2 3 21 2M8 24Q8 9 21 8M13 24q0-9 8-10" /><circle cx="19.500" cy="21.500" r="1.500" fill="#fff" stroke="none" /></svg></button>
        <button aria-label="OneDrive" className="mr-[18px]"><svg className="h-6 w-6" viewBox="0 0 24 24"><path d="M5 9q1-6 7-6t7 7l-8 5-8-4z" fill="#999" /><path d="M4 22q-4-1-4-5t5-6q3 0 6 3l7-3q6 1 6 6t-5 5z" fill="#f4f4f4" /></svg></button>
        <button className="mr-6 text-[17px]">ESP</button>
        <button className="mr-[29px] flex flex-col items-center text-[17px] leading-7"><span>16:57</span><span>27-04-2021</span></button>
        <button aria-label="6 notifications" className="mr-[18px] pt-[6px]"><svg className="h-[38px] w-9" viewBox="0 0 36 38"><path d="M0 1h24v20H14l-4 5-1-5H0z" fill="#fff" /><path d="M5 6h14M5 11h14M5 16h10" stroke="#1d1d1d" strokeWidth="1.500" /><circle cx="23.500" cy="25" r="12" fill="#2c2c2c" stroke="#999" strokeWidth="1.500" /><text x="23.500" y="31" textAnchor="middle" fontSize="17" fontWeight="bold" fill="#fff" className={SYS}>6</text></svg></button>
        <span className="mr-[7px] h-full w-px bg-[#777]" />
      </div>
    </footer>
  );
}

export default function App() {
  return (
    <div className={`flex h-screen flex-col overflow-hidden bg-white ${UI}`}>
      <TitleBar />
      <DocBar />
      <Ribbon />
      <main className="relative min-h-0 flex-1 overflow-hidden">
        <Viewport />
        <div className="relative flex h-full flex-col items-start justify-between">
          <BrowserPanel />
          <div className="mb-[7px] ml-[6px]"><PanelHead title="COMMENTS" plus /></div>
        </div>
        <ViewCube />
        <NavBar />
      </main>
      <div className="relative">
        <Timeline />
        <div className={`pointer-events-none absolute -top-[42px] right-[76px] w-[401px] whitespace-nowrap text-[#b9b9b9] ${SYS}`}>
          <p className="text-[28px] leading-10">Activar Windows</p>
          <p className="text-[21px] leading-7">Ve a Configuración para activar Windows.</p>
        </div>
      </div>
      <Taskbar />
    </div>
  );
}
